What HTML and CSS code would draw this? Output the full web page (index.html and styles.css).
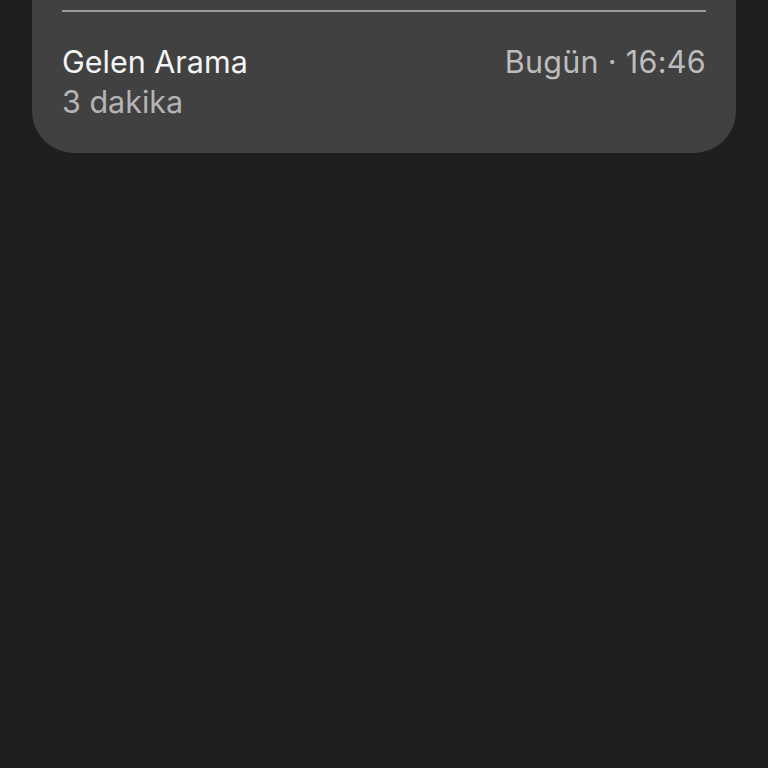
FILE: index.html
```html
<!DOCTYPE html>
<html lang="tr">
<head>
    <meta charset="UTF-8">
    <meta name="viewport" content="width=device-width, initial-scale=1.0">
    <title>Arama Geçmişi</title>
    <link rel="stylesheet" href="styles.css">
</head>
<body>
    <div class="card">
        <div class="divider"></div>
        <div class="call">
            <div class="call-info">
                <div class="call-type">Gelen Arama</div>
                <div class="call-duration">3 dakika</div>
            </div>
            <div class="call-time">Bugün · 16:46</div>
        </div>
    </div>
</body>
</html>
```

FILE: styles.css
```css
body {
    margin: 0;
    background-color: #1f1f1f;
    font-family: Inter, "Noto Sans", sans-serif;
    height: 768px;
}
.card {
    margin: -40px 32px 0;
    padding: 50px 30px 31px;
    background: #414141;
    border-radius: 0 0 42px 42px;
}
.divider {
    height: 2px;
    background: #9c9c9c;
}
.call {
    display: flex;
    justify-content: space-between;
    align-items: flex-start;
    padding-top: 30px;
}
.call-type {
    color: #f4f4f4;
    font-size: 30.5px;
    line-height: 40px;
}
.call-duration {
    color: #b4b4b4;
    font-size: 30.5px;
    line-height: 40px;
}
.call-time {
    color: #bcbcbc;
    font-size: 30.5px;
    line-height: 40px;
    letter-spacing: 0.3px;
}
```
